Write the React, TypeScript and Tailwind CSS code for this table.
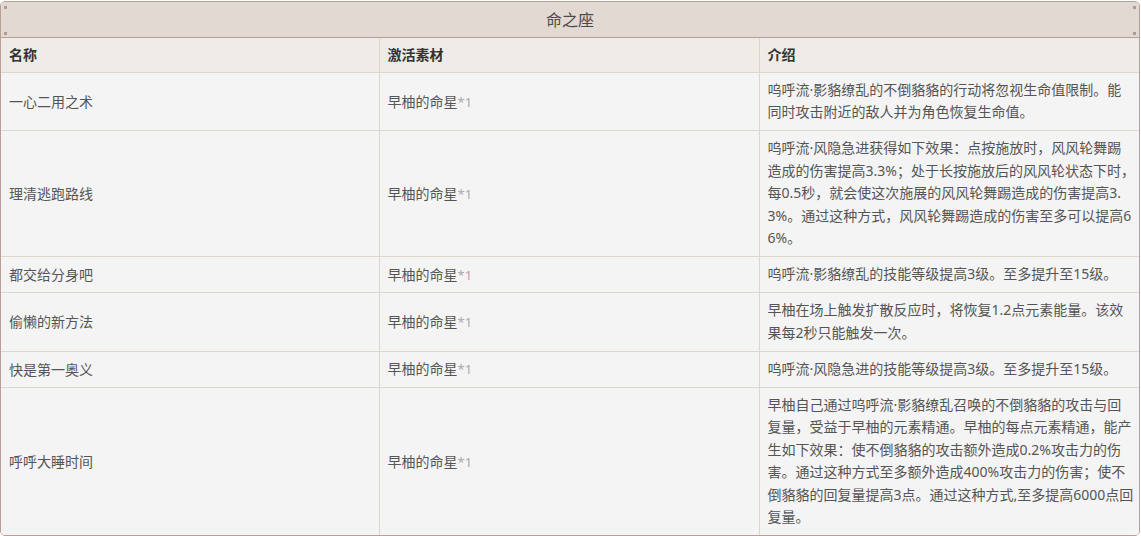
// description lines are split exactly where the reference wraps them
const ROWS = [
  {
    name: '一心二用之术',
    desc: ['呜呼流·影貉缭乱的不倒貉貉的行动将忽视生命值限制。能', '同时攻击附近的敌人并为角色恢复生命值。'],
  },
  {
    name: '理清逃跑路线',
    desc: [
      '呜呼流·风隐急进获得如下效果：点按施放时，风风轮舞踢',
      '造成的伤害提高3.3%；处于长按施放后的风风轮状态下时，',
      '每0.5秒，就会使这次施展的风风轮舞踢造成的伤害提高3.',
      '3%。通过这种方式，风风轮舞踢造成的伤害至多可以提高6',
      '6%。',
    ],
  },
  {
    name: '都交给分身吧',
    desc: ['呜呼流·影貉缭乱的技能等级提高3级。至多提升至15级。'],
  },
  {
    name: '偷懒的新方法',
    desc: ['早柚在场上触发扩散反应时，将恢复1.2点元素能量。该效', '果每2秒只能触发一次。'],
  },
  {
    name: '快是第一奥义',
    desc: ['呜呼流·风隐急进的技能等级提高3级。至多提升至15级。'],
  },
  {
    name: '呼呼大睡时间',
    desc: [
      '早柚自己通过呜呼流·影貉缭乱召唤的不倒貉貉的攻击与回',
      '复量，受益于早柚的元素精通。早柚的每点元素精通，能产',
      '生如下效果：使不倒貉貉的攻击额外造成0.2%攻击力的伤',
      '害。通过这种方式至多额外造成400%攻击力的伤害；使不',
      '倒貉貉的回复量提高3点。通过这种方式,至多提高6000点回',
      '复量。',
    ],
  },
]

function Dot({ className }: { className: string }) {
  return <span className={`absolute w-[3px] h-[3px] bg-[#b39a90] ${className}`} />
}

export default function App() {
  return (
    <div
      className="w-[1141px] h-[536px] bg-white pt-px"
      style={{ fontFamily: '"Noto Sans", "Noto Sans CJK SC", sans-serif' }}
    >
      <div className="w-[1140px] border border-[#b8a097] rounded-[5px] overflow-hidden">
        {/* Title bar */}
        <div className="relative h-[36px] bg-[#e2d9d2] border-b border-[#b8a097] flex items-center justify-center">
          <Dot className="left-[3px] top-[4px]" />
          <Dot className="left-[3px] top-[30px]" />
          <Dot className="right-[3px] top-[4px]" />
          <Dot className="right-[3px] top-[30px]" />
          <span className="text-[16px] text-[#4a4a4a] leading-none">命之座</span>
        </div>

        <table className="w-full table-fixed border-collapse text-[14px] text-[#555]">
          <colgroup>
            <col className="w-[378px]" />
            <col className="w-[380px]" />
            <col />
          </colgroup>
          <thead>
            <tr className="bg-[#efebe6] h-[34px]">
              {['名称', '激活素材', '介绍'].map((h, i) => (
                <th
                  key={h}
                  className={`text-left font-bold text-[#333] px-2 py-0 border-b border-[#ddd6ce] ${
                    i < 2 ? 'border-r' : ''
                  }`}
                >
                  {h}
                </th>
              ))}
            </tr>
          </thead>
          <tbody>
            {ROWS.map((r, idx) => {
              const last = idx === ROWS.length - 1
              return (
                <tr key={r.name} className="bg-[#f4f4f4]">
                  <td className={`px-2 py-[6px] align-middle border-r border-[#ddd6ce] ${last ? '' : 'border-b'}`}>
                    {r.name}
                  </td>
                  <td className={`px-2 py-[6px] align-middle border-r border-[#ddd6ce] ${last ? '' : 'border-b'}`}>
                    早柚的命星<span className="text-[#aaa] text-[13px]">*1</span>
                  </td>
                  <td
                    className={`pl-2 pr-1 py-[6.25px] align-middle leading-[22.5px] whitespace-nowrap border-[#ddd6ce] ${
                      last ? '' : 'border-b'
                    }`}
                  >
                    {r.desc.map((line) => (
                      <span key={line} className="block">
                        {line}
                      </span>
                    ))}
                  </td>
                </tr>
              )
            })}
          </tbody>
        </table>
      </div>
    </div>
  )
}
